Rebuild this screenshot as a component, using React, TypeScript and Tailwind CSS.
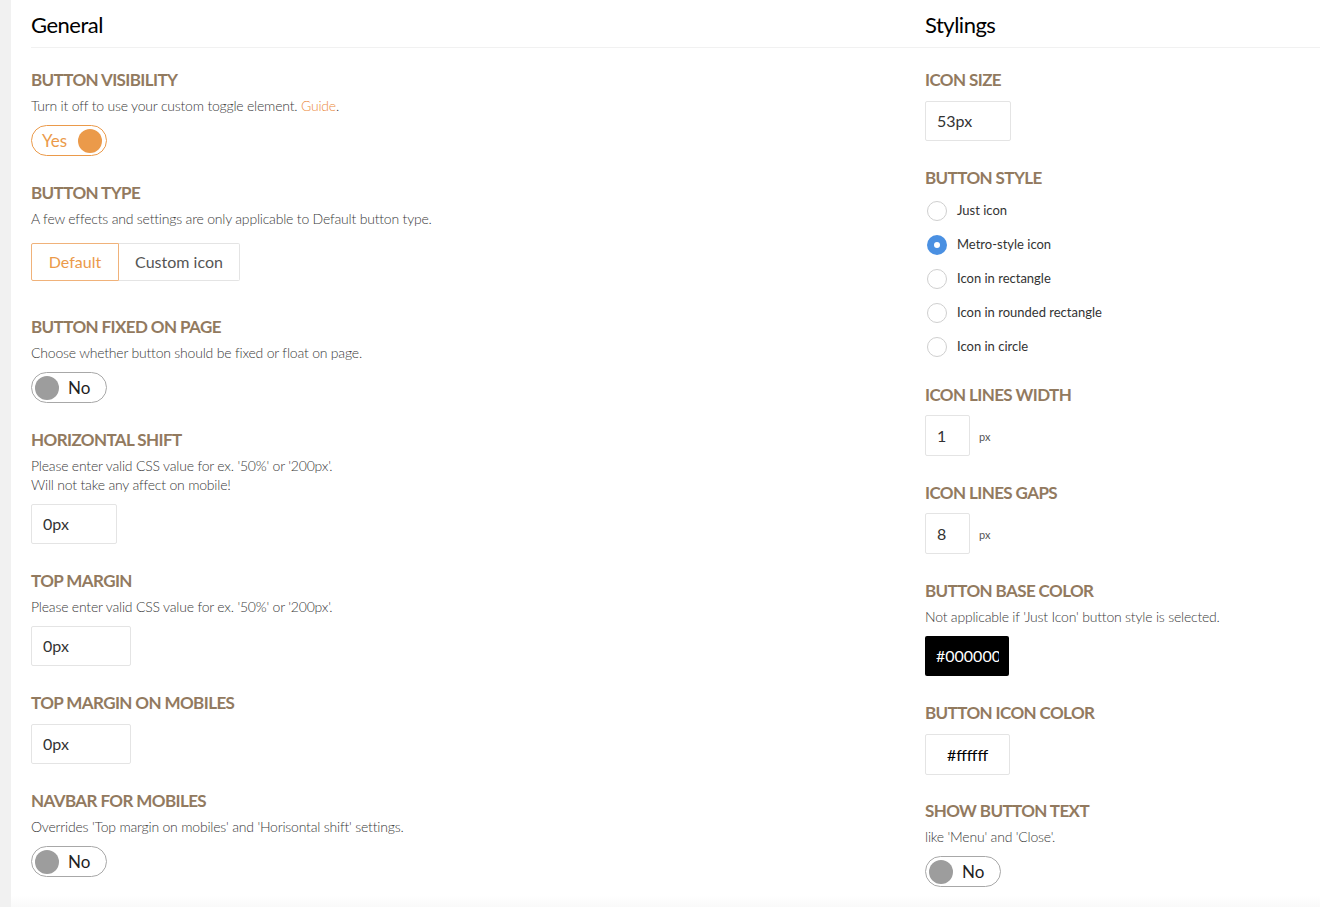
import React, { useState } from 'react';

const font = { fontFamily: 'Lato, "Open Sans", sans-serif' };

function Heading({ children }: { children: React.ReactNode }) {
  return <h3 className="text-[17px] leading-[20px] font-bold text-[#927a5f] tracking-[-0.6px] uppercase">{children}</h3>;
}

function Desc({ children }: { children: React.ReactNode }) {
  return <p className="mt-[6px] text-[14px] leading-[19px] font-light text-[#3a3a3a] tracking-[-0.2px]">{children}</p>;
}

function Toggle({ on, onClick }: { on: boolean; onClick: () => void }) {
  return (
    <button
      onClick={onClick}
      className={
        on
          ? 'mt-[10px] w-[76px] h-[31px] rounded-full border border-[#eb9a4a] flex items-center justify-between pl-[10px] pr-[4px]'
          : 'mt-[10px] w-[76px] h-[31px] rounded-full border border-[#a8a8a8] flex items-center gap-[9px] pl-[3px]'
      }
    >
      {on ? (
        <>
          <span className="text-[17px] text-[#eb9a4a]">Yes</span>
          <span className="w-[24px] h-[24px] rounded-full bg-[#eb9a4a]" />
        </>
      ) : (
        <>
          <span className="w-[24px] h-[24px] rounded-full bg-[#9d9d9d]" />
          <span className="text-[17px] text-[#222]">No</span>
        </>
      )}
    </button>
  );
}

function TextBox({ value, w, tight, tall }: { value: string; w: string; tight?: boolean; tall?: boolean }) {
  return (
    <div
      className={`${tight ? 'mt-[11px]' : 'mt-[10px]'} ${w} ${tall ? 'h-[41px]' : 'h-10'} border border-[#e4e4e4] rounded-[2px] flex items-center px-[11px] text-[16px] text-[#333]`}
    >
      {value}
    </div>
  );
}

function Section({ children, className = 'mt-[27px]' }: { children: React.ReactNode; className?: string }) {
  return <div className={className}>{children}</div>;
}

export default function App() {
  const [visible, setVisible] = useState(true);
  const [fixed, setFixed] = useState(false);
  const [navbar, setNavbar] = useState(false);
  const [showText, setShowText] = useState(false);
  const [type, setType] = useState('default');
  const [style, setStyle] = useState('metro');

  const styles = [
    ['just', 'Just icon'],
    ['metro', 'Metro-style icon'],
    ['rect', 'Icon in rectangle'],
    ['rounded', 'Icon in rounded rectangle'],
    ['circle', 'Icon in circle'],
  ];

  return (
    <div className="min-h-screen flex bg-white relative overflow-hidden" style={font}>
      <div className="w-[11px] shrink-0 bg-[#f1f1f1]" />
      <div className="flex-1 flex pl-5">
        {/* General */}
        <div className="w-[874px] shrink-0 pb-8">
          <h2 className="pt-[14px] pb-[11px] text-[22px] leading-[22px] text-black tracking-[-0.5px] border-b border-[#f1f1f1]">General</h2>

          <div className="mt-[22px]">
            <Heading>Button visibility</Heading>
            <Desc>
              Turn it off to use your custom toggle element. <a className="text-[#eb8a3c]">Guide</a>.
            </Desc>
            <Toggle on={visible} onClick={() => setVisible(!visible)} />
          </div>

          <Section className="mt-[27px] pb-[9px]">
            <Heading>Button type</Heading>
            <Desc>A few effects and settings are only applicable to Default button type.</Desc>
            <div className="mt-[15px] flex">
              <button
                onClick={() => setType('default')}
                className={
                  type === 'default'
                    ? 'w-[88px] h-[38px] border border-[#f0b27a] rounded-l-[2px] text-[16px] text-[#eb9a4a]'
                    : 'w-[88px] h-[38px] border border-[#e4e4e4] rounded-l-[2px] text-[16px] text-[#555]'
                }
              >
                Default
              </button>
              <button
                onClick={() => setType('custom')}
                className={
                  type === 'custom'
                    ? 'w-[121px] h-[38px] border border-[#f0b27a] rounded-r-[2px] text-[16px] text-[#eb9a4a]'
                    : 'w-[121px] h-[38px] border border-l-0 border-[#e4e4e4] rounded-r-[2px] text-[16px] text-[#555]'
                }
              >
                Custom icon
              </button>
            </div>
          </Section>

          <Section>
            <Heading>Button fixed on page</Heading>
            <Desc>Choose whether button should be fixed or float on page.</Desc>
            <Toggle on={fixed} onClick={() => setFixed(!fixed)} />
          </Section>

          <Section>
            <Heading>Horizontal shift</Heading>
            <Desc>
              Please enter valid CSS value for ex. '50%' or '200px'.
              <br />
              Will not take any affect on mobile!
            </Desc>
            <TextBox value="0px" w="w-[86px]" />
          </Section>

          <Section>
            <Heading>Top margin</Heading>
            <Desc>Please enter valid CSS value for ex. '50%' or '200px'.</Desc>
            <TextBox value="0px" w="w-[100px]" />
          </Section>

          <Section>
            <Heading>Top margin on mobiles</Heading>
            <TextBox value="0px" w="w-[100px]" tight />
          </Section>

          <Section>
            <Heading>Navbar for mobiles</Heading>
            <Desc>Overrides 'Top margin on mobiles' and 'Horisontal shift' settings.</Desc>
            <Toggle on={navbar} onClick={() => setNavbar(!navbar)} />
          </Section>
        </div>

        {/* Stylings */}
        <div className="flex-1 pb-8">
          <h2 className="pl-5 pt-[14px] pb-[11px] text-[22px] leading-[22px] text-black tracking-[-0.5px] border-b border-[#f1f1f1]">Stylings</h2>
          <div className="pl-5">
            <div className="mt-[22px]">
              <Heading>Icon size</Heading>
              <TextBox value="53px" w="w-[86px]" tight />
            </div>

            <Section>
              <Heading>Button style</Heading>
              <div className="mt-[11px] flex flex-col gap-[10px]">
                {styles.map(([id, label]) => (
                  <label key={id} onClick={() => setStyle(id)} className="h-6 flex items-center gap-[10px] pl-[2px] cursor-pointer">
                    {style === id ? (
                      <span className="w-5 h-5 rounded-full bg-[#4a90e2] flex items-center justify-center">
                        <span className="w-[6px] h-[6px] rounded-full bg-white" />
                      </span>
                    ) : (
                      <span className="w-5 h-5 rounded-full border border-[#cfcfcf] bg-white" />
                    )}
                    <span className="text-[13px] text-[#333]">{label}</span>
                  </label>
                ))}
              </div>
            </Section>

            <Section className="mt-[26px]">
              <Heading>Icon lines width</Heading>
              <div className="flex items-center gap-[9px]">
                <TextBox value="1" w="w-[45px]" tall />
                <span className="mt-[14px] text-[11px] text-[#555]">px</span>
              </div>
            </Section>

            <Section>
              <Heading>Icon lines gaps</Heading>
              <div className="flex items-center gap-[9px]">
                <TextBox value="8" w="w-[45px]" tall />
                <span className="mt-[14px] text-[11px] text-[#555]">px</span>
              </div>
            </Section>

            <Section>
              <Heading>Button base color</Heading>
              <Desc>Not applicable if 'Just Icon' button style is selected.</Desc>
              <div className="mt-[10px] w-[84px] h-10 bg-black rounded-[2px] flex items-center pl-[11px] text-[16px] text-white">
                <span className="block w-[63px] overflow-hidden whitespace-nowrap">#000000</span>
              </div>
            </Section>

            <Section className="mt-[27px]">
              <Heading>Button icon color</Heading>
              <div className="mt-[11px] w-[85px] h-[41px] border border-[#e4e4e4] rounded-[2px] flex items-center justify-center text-[16px] text-black">
                #ffffff
              </div>
            </Section>

            <Section className="mt-[26px]">
              <Heading>Show button text</Heading>
              <Desc>like 'Menu' and 'Close'.</Desc>
              <Toggle on={showText} onClick={() => setShowText(!showText)} />
            </Section>
          </div>
        </div>
      </div>
      <div className="pointer-events-none absolute left-[11px] right-0 bottom-0 h-[24px] bg-gradient-to-b from-white/0 to-[#f4f4f4]" />
    </div>
  );
}
